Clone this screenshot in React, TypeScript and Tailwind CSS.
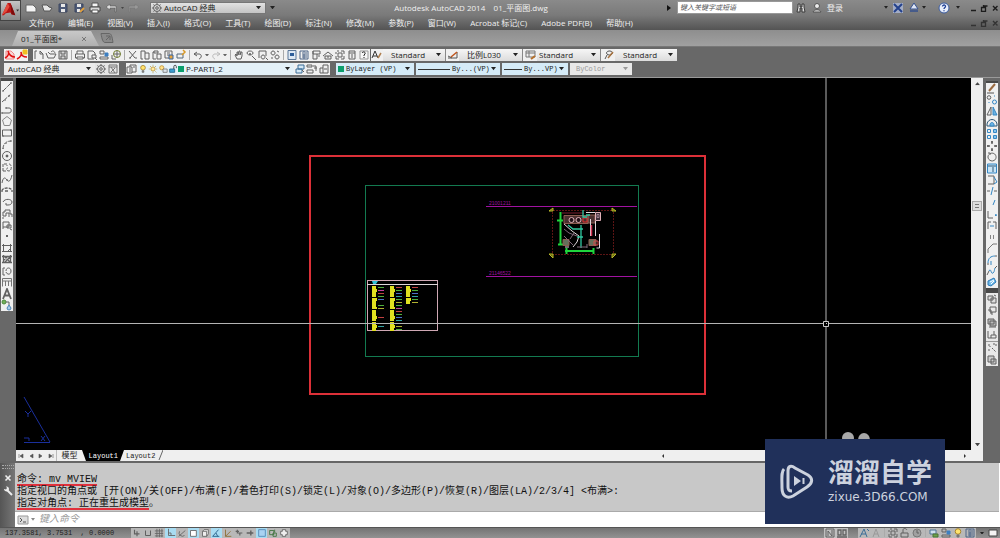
import type { ReactNode } from "react";

// every glyph is drawn on a 12x12 grid
const glyphs: Record<string, ReactNode> = {
  pdf: (
    <>
      <path d="M2 2h5l3 3v5H2z" fill="#f8d8d8" stroke="#e88" />
      <path d="M1 9c4-2 4-5 3-7 1 4 4 6 7 6" stroke="#e01010" strokeWidth="1.5" />
    </>
  ),
  pdfStar: (
    <>
      <path d="M1 10c4-2 5-5 4-7 0 4 3 5 6 5" stroke="#e01010" strokeWidth="1.6" />
      <path d="M7 1h4v4H7z" fill="#f0c020" stroke="#f0c020" />
    </>
  ),
  newFile: <path d="M2 10V2h2M7 2l3 3v5M7 2v3h3" />,
  open: <path d="M1 4l2 5h6l2-4H5M5 5L3 3M6 3c2-2 3-1 4 1" />,
  save: (
    <>
      <path d="M2 2h8v8H2z" fill="#d5d5d5" />
      <path d="M4 2v3h4V2M4 10V7h4v3" />
    </>
  ),
  qSave: (
    <>
      <path d="M2 2h8v8H2z" fill="#4d5a78" stroke="#3c4660" />
      <path d="M4 2h4v3H4zM4 7h4v3H4z" fill="#e8e8e8" stroke="none" />
    </>
  ),
  qSaveAs: (
    <>
      <path d="M2 2h8v8H2z" fill="#4d5a78" stroke="#3c4660" />
      <path d="M4 2h4v3H4zM4 7h3v3H4z" fill="#e8e8e8" stroke="none" />
      <path d="M7 10l4-4" stroke="#e0a040" strokeWidth="2" />
    </>
  ),
  qPrint: (
    <>
      <path d="M3 1h6v4H3z" fill="#f4f4f4" stroke="#555" />
      <path d="M1 5h10v4H1z" fill="#d8d8d8" stroke="#444" />
      <path d="M3 8h6v3H3z" fill="#fff" stroke="#555" />
    </>
  ),
  print: (
    <>
      <path d="M3 5V2h6v3M1.500 5h9v4h-9z" />
      <path d="M3 8h6v2H3z" fill="#fff" />
    </>
  ),
  preview: <path d="M8 10H2V2h5l2 2v2M6 6h4v3H6zM9 9l2 2" />,
  publish: (
    <>
      <path d="M2 2h4v3H2zM2 8h8v2H2z" />
      <path d="M7 4h3v3H7z" fill="#3d7fc0" stroke="#3d7fc0" />
    </>
  ),
  globe: (
    <>
      <circle cx="7" cy="5" r="3.500" stroke="#6d7a2c" />
      <path d="M7 2v6M4 5h6M2 6v4h4" />
    </>
  ),
  cut: <path d="M2 2l6 7M9 2L3 9M2 9h2M8 9h2" />,
  copy: <path d="M6 2H2v8h2M6 4h4v6H6zM6 2v2" />,
  paste: <path d="M3 3H2v7h3M3 2h4v2H3zM6 5h4v5H6z" />,
  match: (
    <>
      <path d="M2 2h7v7H2zM4 4h3M4 6h3" />
      <path d="M6 6h4v4H6z" fill="#e8a33a" stroke="#3566a8" />
    </>
  ),
  block: (
    <>
      <path d="M2 5h6v4H2z" stroke="#55687a" />
      <path d="M8 1l2 2-3 3" stroke="#d99a28" strokeWidth="1.500" />
    </>
  ),
  undo: <path d="M5 3L2 5l3 2M2 5h5c3 0 3 4 0 5" />,
  redo: <path d="M7 3l3 2-3 2M10 5H5c-3 0-3 4 0 5" stroke="#bbb" />,
  pan: <path d="M4 10L2 6l1-1 1 2V3h1v3l1-4h1v4l1-3h1v4L8 10z" />,
  zoom: <path d="M5 2a3 2 0 1 0 .1 0zM7 7l4 4M4 5h2M5 4v2" />,
  zoomWin: <path d="M2 9V2h7v5M6 6a2 2 0 1 0 .1 0zM9 9l2 2" />,
  zoomPrev: <path d="M4 2a2 2 0 1 0 .1 0zM8 6a2 2 0 1 0 .1 0zM8 2l2 1M3 8v2" />,
  props: (
    <>
      <path d="M2 1.500h8v9H2z" fill="#dde8f4" stroke="#5a7698" />
      <path d="M4 4h4v3H4z" fill="#2d5d9a" stroke="none" />
    </>
  ),
  dc: <path d="M2 2h8v8H2zM4 4h1M7 4h2M4 6h5M4 8h5M6 2v8" stroke="#4d6488" />,
  palette: <path d="M3 2h7v3H3zM3 2v8h4V5M8 7h2" />,
  sheet: <path d="M1 7l5-4 5 4M3 7h6v3H3zM5 8h2" />,
  markup: <path d="M3 2h2M7 2h3v3M10 7v3H7M5 10H2V7M2 5V3M4 4h4v4H4z" />,
  calc: <path d="M3 2h6v8H3zM3 4h6M5 6h2M5 8h2" />,
  help: (
    <>
      <path d="M2 2h8v8H2z" fill="#f8f8f8" stroke="#999" />
      <path d="M4 4c1-2 4-1 3 1L6 6v1M6 8v1" stroke="#222" />
    </>
  ),
  textStyle: (
    <>
      <path d="M1 9l3-7 3 7M2 7h4" stroke="#333" />
      <path d="M7 9l3-5" stroke="#b08050" strokeWidth="1.500" />
    </>
  ),
  dimStyle: (
    <>
      <path d="M1 9h9M1 7l4 2M10 3v6" stroke="#555" />
      <path d="M4 8l6-5" stroke="#c0551c" strokeWidth="1.500" />
    </>
  ),
  tableStyle: (
    <>
      <path d="M1 2h9v6H1zM1 4h9M4 2v6" stroke="#777" />
      <path d="M6 10l4-3" stroke="#b5702c" strokeWidth="2" />
    </>
  ),
  leaderStyle: (
    <>
      <path d="M6 2a3 2 0 1 0 1 0zM4 6L2 10" stroke="#555" />
      <path d="M5 9l5-6" stroke="#a97440" strokeWidth="1.500" />
    </>
  ),
  gear: (
    <>
      <circle cx="6" cy="6" r="3.500" />
      <circle cx="6" cy="6" r="1.300" />
      <path d="M6 1v1M6 10v1M1 6h1M10 6h1M2.500 2.500l1 1M8.500 8.500l1 1M9.500 2.500l-1 1M2.500 9.500l1-1" />
    </>
  ),
  myWs: <path d="M2 2h8v8H2zM2 4h8M4 4l4 6M8 5l-4 4" stroke="#777" />,
  layers: <path d="M1 4h5v6H1zM4 4V2h6v7H6M3 6h2M3 8h2M7 4h2" />,
  bulb: (
    <>
      <circle cx="6" cy="4.500" r="2.800" fill="#ffe36e" stroke="#a8842a" />
      <path d="M5 8h2v2H5z" fill="#777" stroke="#777" />
    </>
  ),
  sun: (
    <>
      <circle cx="6" cy="6" r="2.500" fill="#ffe9a0" stroke="#b8902e" />
      <path d="M6 1v1M6 10v1M1 6h1M10 6h1M2.500 2.500l1 1M9 9l1 1M9.500 2.500l-1 1" stroke="#b8902e" />
    </>
  ),
  freeze: (
    <>
      <circle cx="4.500" cy="4.500" r="2.500" fill="#ffe08a" stroke="#c09030" />
      <path d="M6 6h5v4H6z" fill="#dfe7ee" stroke="#777" />
    </>
  ),
  lock: (
    <>
      <path d="M2 6h6v4H2z" fill="#3d9fd0" stroke="#23648a" />
      <path d="M7 6V3c0-2 3-2 3 0v2" stroke="#333" />
    </>
  ),
  layerPrev: (
    <>
      <path d="M4 2h6v4H4zM2 6h6v4H2z" fill="#d5e8f5" stroke="#3c6f98" />
      <path d="M8 7l2 2" />
    </>
  ),
  layerState: <path d="M1 2h5v2H1zM1 7h6v3H1zM7 3h3v5M8 5h3" />,
  layerWalk: <path d="M5 2h5v8H5zM5 5H2v5h3M6 6h3" />,
  line: <path d="M2 10l8-8M1 10h2M9 2h2" strokeDasharray="5 1" />,
  xline: <path d="M1 10l9-8M3 8h2M7 4h2" strokeDasharray="3 1" />,
  pline: <path d="M1 9h7c3 0 3-5 0-5H5M1 8v2M5 3v2" />,
  polygon: <path d="M6 1.500l4.500 3.500-1.700 5.500H3.200L1.500 5z" stroke="#888" />,
  rect: <path d="M1.500 3h9v6h-9zM1 9h2M9 3h2" />,
  arc: <path d="M2 11c0-5 3-8 8-8M2 10v1M5 5v1M9 3h2" strokeDasharray="4 1" />,
  circle: (
    <>
      <circle cx="6" cy="6" r="4.500" />
      <circle cx="6" cy="6" r="1" fill="#333" />
    </>
  ),
  cloud: <path d="M2 10V3h4v2M2 10h3M8 3c3 0 3 7 0 7s-3-3-1-3" strokeDasharray="3 1" />,
  spline: <path d="M1 10c1-6 3-6 5-3s4 0 5-5M5 7h2" />,
  ellipse: <path d="M1 7c0-4 10-4 10 0M1 6v2M11 6v2M4 7h4" strokeWidth="1.300" strokeDasharray="3 1" />,
  ellArc: <path d="M2 6c2-4 9-3 9 0 0 2-2 3-4 3M4 8h2v2" />,
  insert: <path d="M2 9V5h2V3h5v4h2v3M2 9h3V6h3v4M1 11h2" />,
  makeBlock: <path d="M2 3h6v5H2zM6 6h4v3H6zM1 9h2M9 10l2 1" />,
  point: <circle cx="6" cy="6" r="1" fill="#333" stroke="none" />,
  hatch: <path d="M2.500 2v8M9.500 2v8M1 3.500h10M1 9.500h10M7 9l2-2" />,
  gradient: <path d="M2.500 2v8M9.500 2v8M1 3.500h10M1 9.500h10M3 7l4-4M4 9l5-5M3 3l6 6" strokeWidth="1.300" />,
  region: <path d="M2 3v7h2M5 6c0-4 5-4 5 0s-4 4-5 1M2 3h2" />,
  table: <path d="M1.500 2.500h9v8M1.500 2.500v8M1 5h10M4.500 5v5M7.500 5v5" stroke="#777" />,
  mtext: <path d="M2 11L6 1l4 10M3.500 7.500h5" strokeWidth="1.800" />,
  addSel: (
    <>
      <circle cx="3" cy="3" r="2" fill="#72b05a" stroke="#4e8a3a" />
      <path d="M5 3h3v3" />
      <path d="M8 6l2 3a2 2 0 1 1-4 0z" fill="#a9cbe8" stroke="#4b84b6" />
    </>
  ),
  erase: (
    <>
      <path d="M3 8l6-7" stroke="#9a6a40" strokeWidth="2" />
      <path d="M1 10h7" stroke="#555" />
    </>
  ),
  copyObj: (
    <>
      <circle cx="3" cy="3.500" r="1.800" />
      <circle cx="8.500" cy="8" r="2" stroke="#3487c4" />
      <path d="M8 2h1M3 8v1" stroke="#3487c4" />
    </>
  ),
  mirror: (
    <>
      <path d="M5 2v8H1z" />
      <path d="M7 2v8h4z" fill="#6db4e4" stroke="#3487c4" />
    </>
  ),
  offset: (
    <>
      <path d="M1 9h10V7c-1-6-9-6-10 0z" stroke="#2f5877" />
      <path d="M4 9V7c1-2 3-2 4 0v2z" fill="#6db4e4" stroke="#3487c4" />
    </>
  ),
  array: (
    <>
      <path d="M1.500 1.500h3v3h-3zM1.500 7.500h3v3h-3z" stroke="#3487c4" />
      <path d="M7.500 1.500h3v3h-3zM7.500 7.500h3v3h-3z" fill="#8ac5ee" stroke="#3487c4" />
    </>
  ),
  move: <path d="M6 1v3M6 8v3M1 6h3M8 6h3M5 2h2M5 10h2M2 5v2M10 5v2" strokeWidth="1.400" />,
  rotate: <path d="M4 2.500c6-2 8 5 4 7s-8-3-5-6M2 2h2v2" />,
  scale: (
    <>
      <path d="M1.500 2v9h9V2z" fill="#c9e4f6" stroke="#3487c4" />
      <path d="M2 4h8M7 5v5" stroke="#2c5878" />
    </>
  ),
  stretch: (
    <>
      <path d="M2 2h6v8H2" />
      <path d="M8 3l3 5-3 2" stroke="#3487c4" />
    </>
  ),
  trim: (
    <>
      <path d="M1 6h3M8 6h3" />
      <path d="M7 2L5 10" stroke="#3487c4" />
    </>
  ),
  extend: <path d="M9 3l-2 5" stroke="#3487c4" />,
  breakPt: (
    <>
      <path d="M2 3v7h5" />
      <path d="M9 7h1v1" stroke="#3487c4" strokeWidth="1.500" />
    </>
  ),
  breakObj: (
    <>
      <path d="M2 10V3h3M7 3h3v7" />
      <path d="M4 7h4" stroke="#3487c4" />
    </>
  ),
  join: <path d="M4 5h1M7 5h1M4 7h1M7 7h1" strokeWidth="1.300" />,
  chamfer: <path d="M2 11V7l5-5h4" stroke="#777" />,
  fillet: (
    <>
      <path d="M2 11V9M9 2h2" />
      <path d="M2 9c0-5 3-7 7-7M5 11V7" stroke="#3487c4" />
    </>
  ),
  blend: (
    <>
      <path d="M1 10l2-4M9 3l2-2" />
      <path d="M3 6c2-4 2 4 4 2s1-3 2-5" stroke="#3487c4" />
    </>
  ),
  explode: (
    <>
      <path d="M2 5l6-3 2 4-5 4-3-1z" fill="#75bbe8" stroke="#2a7ab8" />
      <path d="M4 6l4-2M5 8l3-3" stroke="#fff" />
    </>
  ),
  orderA: <path d="M2 3h5v4H2zM5 5h5v5H5zM8 2l2 1" fill="#ddd" />,
  orderB: <path d="M4 2h6v5H4zM2 5h3v4M6 7v3" />,
  orderC: <path d="M2 2h6v5H2zM4 4h6v5H4zM3 10h7" fill="#bbb" />,
  orderD: <path d="M2 2v7h3M5 6h5v3H5zM8 2v4" />,
  orderE: <path d="M2 3h2v2M7 2h3v3M3 7v3M6 6l4 4" strokeDasharray="2 1" />,
  orderF: <path d="M2 2h6v6H2zM5 5h5v5H5z" fill="#ccc" />,
  infer: <path d="M3 2v5h6M6 4v6" strokeWidth="1.400" />,
  snap: <path d="M3 3v6h6V3" strokeWidth="1.200" />,
  grid: <path d="M1 3.500h10M1 6.500h10M1 9.500h10M3.500 1v10M6.500 1v10M9.500 1v10" />,
  ortho: <path d="M3 1v8h8M3 6h3v3" />,
  polar: <path d="M2 10l8-7M3 4a4 4 0 0 0 6 5" />,
  osnap: <path d="M3 3h7v7H3z" fill="#fff" />,
  osnap3: <path d="M3 4h5v6H3zM3 4l2-2h5v5l-2 3" fill="#eee" />,
  otrack: <path d="M9 2L2 10h8M6 6l2 4" stroke="#1b5480" />,
  ducs: <path d="M3 2v8h7M3 10l6-6" stroke="#8c6a2c" />,
  dyn: <path d="M4 2v4h6M7 6v3M2 4h4" strokeWidth="1.400" />,
  lwt: <path d="M2 6h8M7 3v6" strokeWidth="1.700" />,
  tpy: <path d="M2 2h8v8H2z" fill="#a9d2f2" stroke="#4d86b5" />,
  qp: <path d="M2 3h5v5H2zM6 6h4v4H6zM8 2v3" stroke="#3a7038" />,
  sc: <path d="M4 2h4v2h2v4H8v2H4V8H2V4h2z" fill="#eee" />,
  model: <path d="M2 2h8v8H2zM4 9V4l4 5V3" />,
  views: <path d="M2 3h3v5H2zM7 3h3v5H7zM1 10h10" strokeWidth="1.300" />,
  anno: <path d="M2 10l4-8 3 8M3 7h5M9 2l2 2" stroke="#3b6e98" />,
  annoAuto: <path d="M3 10l3-8 3 8M4 7h4" stroke="#999" />,
  ucsLock: <path d="M2 6h7v4H2zM4 6V3c0-2 3-2 4 0" />,
  perf: (
    <>
      <circle cx="6" cy="6" r="4" fill="#a0a0a0" stroke="#777" />
      <path d="M6 3v3h2" />
    </>
  ),
  tray: (
    <>
      <path d="M2 3h6v4H2z" fill="#cfe0ee" stroke="#4f7596" />
      <path d="M5 7h5v3H5z" fill="#6da24a" stroke="#4b7236" />
    </>
  ),
  binoc: <path d="M3 2h2v3h2V2h2v3l1 5H7V6H5v4H2l1-5z" fill="#ddd" stroke="#3b3b3b" />,
  person: (
    <>
      <circle cx="6" cy="4" r="2.500" fill="#eee" stroke="#555" />
      <path d="M2 10c1-3 7-3 8 0z" fill="#ddd" stroke="#555" />
    </>
  ),
  exchange: (
    <>
      <path d="M1 1h10v10H1z" fill="#a3adc6" stroke="none" />
      <path d="M2 2l8 8M10 2l-8 8" stroke="#23418c" strokeWidth="2" />
    </>
  ),
  triangle: (
    <>
      <path d="M6 1l4 6H2z" fill="#dfe6f5" stroke="#34508f" />
      <path d="M2 9h8" stroke="#34508f" strokeWidth="1.500" />
    </>
  ),
  question: (
    <>
      <circle cx="6" cy="6" r="5" fill="#e8eefb" stroke="#3a5ba0" />
      <path d="M4.500 4.500c0-2 3.200-2 3 0 0 1-1.500 1-1.500 2.500M6 8.300v1" stroke="#1d3f96" strokeWidth="1.300" />
    </>
  ),
};

function Glyph({ name, className = "size-3" }: { name: string; className?: string }) {
  return (
    <svg viewBox="0 0 12 12" className={className} fill="none" stroke="#606060" strokeWidth="1" aria-hidden="true">
      {glyphs[name]}
    </svg>
  );
}

function Tool({ name, className = "" }: { name: string; className?: string }) {
  return (
    <button type="button" aria-label={name} className={`flex shrink-0 items-center justify-center ${className}`}>
      <Glyph name={name} />
    </button>
  );
}

function Caret({ className = "w-[5px]" }: { className?: string }) {
  return (
    <svg viewBox="0 0 6 4" className={`shrink-0 ${className}`} aria-hidden="true">
      <path d="M0 0h6L3 4z" fill="currentColor" />
    </svg>
  );
}

type ComboProps = {
  label: string;
  value: string;
  className?: string;
  textClass?: string;
  before?: ReactNode;
};

function Combo({ label, value, className = "text-[#222]", textClass = "pl-1", before }: ComboProps) {
  return (
    <label className={`relative flex h-3 shrink-0 items-center ${className}`}>
      {before}
      <select
        aria-label={label}
        className={`h-3 w-full min-w-0 flex-1 appearance-none bg-transparent leading-3 outline-none ${textClass}`}
      >
        <option>{value}</option>
      </select>
      <span className="pointer-events-none absolute inset-y-0 right-1 flex items-center">
        <Caret />
      </span>
    </label>
  );
}

const Sep = () => <span className="mx-0.5 h-2.5 w-px shrink-0 bg-[#aaa]" />;

const menus = [
  "文件(F)", "编辑(E)", "视图(V)", "插入(I)", "格式(O)", "工具(T)", "绘图(D)", "标注(N)",
  "修改(M)", "参数(P)", "窗口(W)", "Acrobat 标记(C)", "Adobe PDF(B)", "帮助(H)",
];

const standardTools = [
  ["newFile", "open", "save"],
  ["print", "preview", "publish", "globe"],
  ["cut", "copy", "paste", "match", "block"],
  ["undo", "redo"],
  ["pan", "zoom", "zoomWin", "zoomPrev"],
  ["props", "dc", "palette", "sheet", "markup", "calc", "help"],
];

const drawTools = [
  "line", "xline", "pline", "polygon", "rect", "arc", "circle", "cloud", "spline", "ellipse",
  "ellArc", "insert", "makeBlock", "point", "hatch", "gradient", "region", "table", "mtext", "addSel",
];

const modifyTools = [
  "erase", "copyObj", "mirror", "offset", "array", "move", "rotate", "scale", "stretch",
  "trim", "extend", "breakPt", "breakObj", "join", "chamfer", "fillet", "blend", "explode",
];

const statusTools = [
  { name: "infer", on: false },
  { name: "snap", on: false },
  { name: "grid", on: false },
  { name: "ortho", on: true },
  { name: "polar", on: false },
  { name: "osnap", on: true },
  { name: "osnap3", on: false },
  { name: "otrack", on: true },
  { name: "ducs", on: false },
  { name: "dyn", on: false },
  { name: "lwt", on: false },
  { name: "tpy", on: true },
  { name: "qp", on: false },
  { name: "sc", on: false },
];

function WindowButtons({ className }: { className: string }) {
  return (
    <div className={`flex items-center gap-px ${className}`}>
      <button type="button" aria-label="Minimize" className="w-2.5">
        <svg viewBox="0 0 10 8" fill="none" stroke="currentColor"><path d="M3 6.500h5" strokeWidth="1.500" /></svg>
      </button>
      <button type="button" aria-label="Restore" className="w-2.5">
        <svg viewBox="0 0 10 8" fill="none" stroke="currentColor"><path d="M2.500 3.500h4v4h-4zM4 2h4.500M4.500 1v2" strokeWidth="1.300" /></svg>
      </button>
      <button type="button" aria-label="Close" className="w-2.5">
        <svg viewBox="0 0 10 8" fill="none" stroke="currentColor"><path d="M3 2l4.500 4.500M7.500 2L3 6.500" strokeWidth="1.400" /></svg>
      </button>
    </div>
  );
}

function Header() {
  return (
    <header className="flex h-[30px] shrink-0 bg-linear-to-b from-[#8a8a8a] via-[#7a7a7a] to-[#545454] text-[#f0f0f0]">
      <button
        type="button"
        aria-label="Application menu"
        className="flex h-[21px] w-[21px] shrink-0 items-center border border-[#444] bg-linear-to-b from-[#c5c5c5] to-[#8b8b8b]"
      >
        <svg viewBox="0 0 20 20" className="size-[19px]" aria-hidden="true">
          <path d="M7 2h3l5 13-4-1-1-2-5 1-2 2H1z" fill="#b81414" />
          <path d="M7 2L1 15l5-4 3-5z" fill="#e34a3c" />
          <path d="M10 2l5 13-4-1z" fill="#7d0c0c" />
          <path d="M16 9h3l-1.500 2z" fill="#333" />
        </svg>
      </button>
      <div className="flex min-w-0 flex-1 flex-col">
        <div className="flex h-[15px] items-center">
          <div className="flex w-[129px] shrink-0 items-center gap-1 pl-1">
            <button type="button" aria-label="New">
              <svg viewBox="0 0 12 12" className="size-3"><path d="M1 3h7l3 3v4H1z" fill="#f4f4f4" stroke="#666" /></svg>
            </button>
            <button type="button" aria-label="Open">
              <svg viewBox="0 0 12 12" className="size-3"><path d="M1 3h5l2 2 3 1-2 3H3z" fill="#e6e6e6" stroke="#555" /></svg>
            </button>
            <Tool name="qSave" />
            <Tool name="qSaveAs" />
            <Tool name="qPrint" />
            <button type="button" aria-label="Undo" className="flex items-center gap-1 text-[#444]">
              <svg viewBox="0 0 12 12" className="size-3"><path d="M5 2L1 5l4 3V6h5v4h1V4H5z" fill="#ddd" stroke="#555" strokeWidth=".6" /></svg>
              <Caret className="w-[3px]" />
            </button>
            <button type="button" aria-label="Redo" className="flex items-center gap-1 text-[#444]">
              <svg viewBox="0 0 12 12" className="size-3"><path d="M7 2l4 3-4 3V6H2v4H1V4h6z" fill="#999" stroke="#777" strokeWidth=".6" /></svg>
            </button>
          </div>
          <Combo
            label="Workspace"
            value="AutoCAD 经典"
            className="w-[116px] border border-[#777] bg-linear-to-b from-[#e2e2e2] to-[#c4c4c4] text-[8px] text-[#222]"
            textClass="pl-px"
            before={<Glyph name="gear" className="size-3" />}
          />
          <span className="ml-1 text-[#222]"><Caret /></span>
          <h1 className="min-w-0 flex-1 truncate text-center text-[8px] leading-[15px]">
            Autodesk AutoCAD 2014 &nbsp;&nbsp; 01_平面图.dwg
          </h1>
          <div className="flex shrink-0 items-center text-[#222]">
            <svg viewBox="0 0 4 6" className="mr-1.5 h-1.5 w-1"><path d="M0 0v6l4-3z" fill="#111" /></svg>
            <input
              aria-label="Search"
              placeholder="键入关键字或短语"
              className="h-[13px] w-[116px] border border-[#999] bg-white px-0.5 text-[7px] italic placeholder:text-[#555]"
            />
            <Tool name="binoc" className="ml-0.5" />
            <Tool name="person" className="ml-1" />
            <a href="#login" className="ml-0.5 w-[53px] pl-0.5 text-[8px] text-[#f0f0f0]">登录</a>
            <span className="ml-1.5"><Caret className="w-1" /></span>
            <Tool name="exchange" className="ml-1" />
            <Tool name="triangle" className="ml-1" />
            <span className="ml-0.5"><Caret className="w-1" /></span>
            <Tool name="question" className="ml-3" />
            <span className="mr-2 ml-1.5"><Caret className="w-1" /></span>
            <WindowButtons className="text-[#1c1c1c]" />
          </div>
        </div>
        <div className="flex h-[15px] items-center justify-between">
          <nav className="flex w-[612px] justify-between pl-2 text-[8px] leading-[15px] whitespace-nowrap">
            {menus.map((item) => (
              <a key={item} href="#menu">{item}</a>
            ))}
          </nav>
          <WindowButtons className="text-[#333]" />
        </div>
      </div>
    </header>
  );
}

function FileTabs() {
  return (
    <div className="flex h-[17px] shrink-0 items-end border-b border-[#777] bg-linear-to-b from-[#8e8e8e] to-[#a0a0a0] pl-3">
      <div className="flex h-[15px] w-[87px] items-center justify-between bg-linear-to-b from-[#c8c8c8] to-[#b0b0b0] pr-3 pl-[9px] [clip-path:polygon(6px_0,calc(100%_-_8px)_0,100%_100%,0_100%)]">
        <a href="#file" className="text-[8px] leading-3 text-[#222]">01_平面图*</a>
        <button type="button" aria-label="Close tab" className="text-[#777]">
          <svg viewBox="0 0 6 6" className="size-1.5"><path d="M1 1l4 4M5 1L1 5" stroke="currentColor" /></svg>
        </button>
      </div>
      <button type="button" aria-label="New tab" className="mb-0.5">
        <svg viewBox="0 0 16 12" className="h-3 w-4" fill="none" stroke="#666">
          <path d="M2 1.500h8c2 0 3 2 4 9H6c-2 0-3-3-4-9z" fill="#8a8a8a" />
          <path d="M7 4h4v4M7 8l4-4" />
        </svg>
      </button>
    </div>
  );
}

function LineSample({ className }: { className: string }) {
  return <span className={`ml-0.5 h-px shrink-0 bg-[#333] ${className}`} />;
}

function Toolbars() {
  return (
    <div className="flex h-[31px] shrink-0 flex-col gap-0.5 border-b border-[#9a9a9a] bg-[#686868] pt-0.5 pl-1">
      <div className="flex h-3 items-center">
        <div className="mr-[5px] flex w-[24px] bg-[#f2f2f2]">
          <Tool name="pdf" />
          <Tool name="pdfStar" />
        </div>
        <div className="mr-px flex w-[337px] items-center bg-[#f0f0f0]">
          {standardTools.map((group, i) => (
            <div key={i} className="flex items-center">
              {i > 0 && <Sep />}
              {group.map((name) => (
                <span key={name} className="flex items-center text-[#666]">
                  <Tool name={name} />
                  {(name === "undo" || name === "redo") && <Caret className="mx-px w-1" />}
                </span>
              ))}
            </div>
          ))}
        </div>
        <div className="flex bg-[#f0f0f0] text-[8px]">
          <Tool name="textStyle" />
          <Combo label="Text style" value="Standard" className="w-[63px] border-r border-[#888] bg-linear-to-b from-[#f6f6f6] to-[#dcdcdc] text-[#222]" textClass="pl-2" />
          <Tool name="dimStyle" className="ml-px" />
          <Combo label="Dimension style" value="比例L030" className="w-[64px] border-r border-[#888] bg-linear-to-b from-[#f6f6f6] to-[#dcdcdc] text-[#222]" textClass="pl-2" />
          <Tool name="tableStyle" className="ml-0.5" />
          <Combo label="Table style" value="Standard" className="w-[64px] border-r border-[#888] bg-linear-to-b from-[#f6f6f6] to-[#dcdcdc] text-[#222]" textClass="pl-0.5" />
          <Tool name="leaderStyle" className="ml-0.5" />
          <Combo label="Leader style" value="Standard" className="w-[62px] bg-linear-to-b from-[#f6f6f6] to-[#dcdcdc] text-[#222]" textClass="pl-2" />
        </div>
      </div>
      <div className="flex h-3 items-center text-[8px]">
        <Combo label="Workspace list" value="AutoCAD 经典" className="w-[91px] bg-[#ececec] text-[#222]" />
        <div className="mr-[7px] flex w-[24px] bg-[#e6e6e6]">
          <Tool name="gear" />
          <Tool name="myWs" />
        </div>
        <div className="mr-1.5 flex bg-[#f0f0f0]">
          <Tool name="layers" />
          <Combo
            label="Layer"
            value="P-PARTI_2"
            className="w-[156px] bg-[#e4f1f8] text-[#222]"
            textClass="pl-0.5"
            before={
              <span className="flex shrink-0 items-center">
                <Glyph name="bulb" className="size-2.5" />
                <Glyph name="sun" className="size-2.5" />
                <Glyph name="freeze" className="size-2.5" />
                <Glyph name="lock" className="size-2.5" />
                <span className="size-1.5 bg-[#0b9e6c]" />
              </span>
            }
          />
          <Tool name="layerPrev" />
          <Tool name="layerState" />
          <Tool name="layerWalk" />
        </div>
        <div className="flex gap-0.5 font-['Liberation_Mono','Noto_Sans_CJK_SC',monospace] text-[7px]">
          <Combo
            label="Color"
            value="ByLayer (VP)"
            className="w-[78px] bg-[#d5ebf7] text-[#222]"
            textClass="pl-0.5"
            before={<span className="ml-0.5 size-1.5 shrink-0 bg-[#0b9e6c]" />}
          />
          <Combo label="Linetype" value="By...(VP)" className="w-[84px] bg-[#d5ebf7] text-[#222]" textClass="pl-0.5" before={<LineSample className="w-8" />} />
          <Combo label="Lineweight" value="By...VP)" className="w-[66px] bg-[#d5ebf7] text-[#222]" textClass="pl-0.5" before={<LineSample className="w-[18px]" />} />
          <Combo label="Plot style" value="ByColor" className="w-[62px] bg-[#e8e8e8] text-[#999]" textClass="pl-1.5" />
        </div>
      </div>
    </div>
  );
}

const legendColors = ["#4a70c8", "#30a0a0", "#4caf3c", "#b0b030", "#4caf3c", "#c040a0", "#c04040", "#4caf3c"];

const legend = [
  { x: 372, rows: 15, marks: [0, 1, 2, 3, 4, 6, 7, 10, 13] },
  { x: 390, rows: 15, marks: [0, 1, 2, 3, 4, 5, 6, 7, 8, 9, 10, 11, 12, 13, 14] },
  { x: 406, rows: 6, marks: [0, 1, 2, 3, 4, 5] },
];

// model space, drawn in its own units and scaled with the viewport
function Drawing() {
  return (
    <svg
      viewBox="16 78 955 372"
      preserveAspectRatio="xMidYMid slice"
      className="min-w-0 flex-1 bg-black"
      fill="none"
      role="img"
      aria-label="01_平面图"
    >
      <rect x="310" y="156" width="395" height="238" stroke="#dc3038" strokeWidth="2" />
      <rect x="365.500" y="185.500" width="273" height="171" stroke="#137a50" />

      <g stroke="#a012a0" fill="#a012a0">
        <path d="M486 206.500h151M486 276.500h151" />
        <g stroke="none" fontFamily="Liberation Sans, sans-serif" fontSize="5">
          <text x="489" y="205">21001211</text>
          <text x="489" y="275">21146522</text>
        </g>
      </g>

      <path d="M552.500 212v43M552 254.500h61M613.500 212v43M553 210.500h60" stroke="#5c1414" strokeDasharray="2 1" />
      <path d="M549 211l4-3v3zM612 208v3h4zM549 254l4 4v-4zM612 254v4l4-4z" fill="#606010" stroke="#b8b828" />
      <path d="M560.500 212v33M557 220.500h6M558 244.500h5M565 251h29M566.500 248v6M593.500 248v6" stroke="#1fd43c" strokeWidth="2" />
      <path d="M562 213h22" stroke="#7a2030" />
      <g stroke="#8c5c50">
        <path d="M564 215.500h24v8h-24zM588 215h7v8h-7z" fill="#4a3030" />
        <path d="M563 239.500h6v6h-6zM589 239.500h7v6h-7z" fill="#64705a" />
      </g>
      <g stroke="#e0b0b8">
        <circle cx="571.500" cy="220" r="2.500" fill="#221018" />
        <circle cx="578.500" cy="220" r="2.500" fill="#221018" />
        <path d="M583 218h4v4h-4z" stroke="#e03030" />
        <path d="M595.500 212.500h5v8h-5z" fill="#40303a" />
        <path d="M597 214.500h2v3h-2z" stroke="#a08090" />
      </g>
      <path d="M586 212.500h9M590.500 219v17M595.500 221v15M599.500 234v14h-3M564 224l8 7 7 5-2 6-4 5M565 247h4" stroke="#e0d8dc" />
      <path d="M591.500 225v11" stroke="#d03050" strokeWidth="1.500" />
      <path d="M581 225v23M568 225l5 4h10M577 237h6M583 210v7h4M586 215h4" stroke="#30c8a0" strokeWidth="1.300" />
      <path d="M564 229l5 4 8 3M564 236l9 9M574 233l-4 6M577 247h10M587 244v4" stroke="#80687a" />
      <path d="M594 241h4v4h-4z" stroke="#d84848" />

      <rect x="367.500" y="280.500" width="70" height="50" stroke="#cfa8b4" />
      <path d="M367 284.500h71" stroke="#ded6d8" />
      <path d="M372 281h6l-2 3h-3z" fill="#30c0d8" />
      {legend.map((col) => (
        <g key={col.x}>
          {Array.from({ length: col.rows }, (_, i) => (
            <rect key={i} x={col.x} y={286 + i * 3} width={i % 3 === 1 ? 5 : 4} height={i % 4 === 3 ? 2 : 3} fill="#e0e020" />
          ))}
          {col.marks.map((i) => (
            <path key={i} d={`M${col.x + 6} ${287.5 + i * 3}h6`} stroke={legendColors[(i + col.x) % 8]} />
          ))}
        </g>
      ))}

      <path d="M24 397l26 45M24 442.500h26M25 411l3 3 3-3M28 414v3M24 438h5v3M41 436l4 5M45 436l-4 5" stroke="#1a2f9c" />

      <ellipse cx="848" cy="438" rx="6" ry="6" fill="#a8a8a8" />
      <ellipse cx="864" cy="440" rx="6" ry="7" fill="#a8a8a8" />
      <path d="M16 323.500h807M829 323.500h142M826 78v243M826 326v124" stroke="#b4b4b4" />
      <path d="M823.500 321.500h5v5h-5zM826 323.500h1" stroke="#c8c8c8" />
    </svg>
  );
}

function LayoutTabs() {
  return (
    <div className="flex h-[11px] shrink-0 items-stretch bg-[#efefef] font-['Liberation_Mono','Noto_Sans_CJK_SC',monospace] text-[7px] leading-[10px] text-[#222]">
      <div className="flex w-[41px] items-center justify-around border-r border-[#bbb] text-[#555]">
        {["M1 1v4M5 1L2 3l3 2z", "M5 1L2 3l3 2z", "M1 1l3 2-3 2z", "M1 1l3 2-3 2zM5 1v4"].map((d) => (
          <button key={d} type="button" aria-label="Scroll tabs">
            <svg viewBox="0 0 6 6" className="size-1.5"><path d={d} fill="currentColor" stroke="currentColor" strokeWidth=".6" /></svg>
          </button>
        ))}
      </div>
      <button type="button" className="w-[25px] text-[8px]">模型</button>
      <button type="button" className="w-[42px] bg-black pr-1.5 text-right text-white [clip-path:polygon(0_0,100%_0,calc(100%_-_4px)_100%,4px_100%)]">
        Layout1
      </button>
      <button type="button" className="w-[34px] pl-0.5 text-left">Layout2</button>
      <svg viewBox="0 0 5 10" className="h-2.5 w-[5px]"><path d="M5 0L1 10" stroke="#666" /></svg>
      <div className="flex-1" />
      <div className="flex w-1/3 items-center justify-between">
        <button type="button" aria-label="Scroll left">
          <svg viewBox="0 0 4 6" className="h-1.5 w-1"><path d="M3 1v4L1 3z" fill="#333" /></svg>
        </button>
        <button type="button" aria-label="Scroll right" className="mr-4">
          <svg viewBox="0 0 4 6" className="h-1.5 w-1"><path d="M1 1v4l2-2z" fill="#333" /></svg>
        </button>
      </div>
    </div>
  );
}

function Workspace() {
  return (
    <main className="flex min-h-0 flex-1 bg-[#686868]">
      <aside className="w-4 shrink-0 pl-px">
        <div className="h-[3px] w-3 bg-[#484848]" />
        <div className="flex h-[230px] w-3 flex-col justify-between bg-[#f0f0f0]">
          {drawTools.map((name) => (
            <Tool key={name} name={name} className="h-[11px]" />
          ))}
        </div>
      </aside>
      <div className="flex min-w-0 flex-1 flex-col">
        <div className="flex min-h-0 flex-1">
          <Drawing />
          <div className="flex w-3 shrink-0 flex-col items-center justify-between bg-[#efefef] py-1 text-[#444]">
            <button type="button" aria-label="Scroll up" className="rotate-180"><Caret /></button>
            <div className="flex h-2.5 w-2.5 items-center justify-center border border-[#aaa] bg-[#dedede]">
              <span className="h-1 w-1 border-y border-[#777]" />
            </div>
            <div />
            <button type="button" aria-label="Scroll down"><Caret /></button>
          </div>
        </div>
        <LayoutTabs />
      </div>
      <aside className="flex w-[17px] shrink-0 flex-col items-center">
        <div className="mt-[3px] h-0.5 w-3 bg-[#484848]" />
        <div className="flex h-[205px] w-3 flex-col justify-between bg-[#f0f0f0]">
          {modifyTools.map((name) => (
            <Tool key={name} name={name} className="h-[11px]" />
          ))}
        </div>
        <div className="h-[5px] w-3 bg-[#484848]" />
        <div className="flex w-3 flex-col bg-[#e8e8e8]">
          {["orderA", "orderB", "orderC", "orderD"].map((name) => <Tool key={name} name={name} />)}
          <span className="h-px bg-[#999]" />
          {["orderE", "orderF"].map((name) => <Tool key={name} name={name} />)}
        </div>
      </aside>
    </main>
  );
}

function CommandLine() {
  return (
    <section className="flex h-[66px] shrink-0 border-t-2 border-[#666] font-['Liberation_Mono','Noto_Sans_CJK_SC',monospace] text-[10px] leading-3 text-[#111]">
      <div className="flex w-[15px] shrink-0 flex-col items-center bg-linear-to-r from-[#555] to-[#777] pt-0.5 text-[#eee]">
        <span className="h-1 w-3 border-y border-dotted border-[#aaa]" />
        <button type="button" aria-label="Close" className="mt-[5px]">
          <svg viewBox="0 0 8 8" className="size-2"><path d="M1.500 1.500l5 5M6.500 1.500l-5 5" stroke="currentColor" strokeWidth="1.600" /></svg>
        </button>
        <button type="button" aria-label="Customize" className="mt-1">
          <svg viewBox="0 0 10 10" className="size-2.5"><path d="M4.500 4.500L9 9" stroke="currentColor" strokeWidth="2" /><path d="M1 3l2 .500L4 2 3 .500c2-.500 4 2 2.500 4S1 5 1 3z" fill="currentColor" /></svg>
        </button>
      </div>
      <div className="flex min-w-0 flex-1 flex-col border-r border-white">
        <div className="flex min-h-0 flex-1 flex-col justify-end overflow-hidden bg-[#c8c8c8] pb-px pl-0.5 whitespace-nowrap">
          <p>
            <span className="underline decoration-[#e0303c] decoration-2 underline-offset-2 [text-decoration-skip-ink:none]">命令: mv MVIEW</span>
          </p>
          <p>指定视口的角点或 [开(ON)/关(OFF)/布满(F)/着色打印(S)/锁定(L)/对象(O)/多边形(P)/恢复(R)/图层(LA)/2/3/4] &lt;布满&gt;:</p>
          <p>
            <span className="underline decoration-[#e0303c] decoration-2 underline-offset-2 [text-decoration-skip-ink:none]">指定对角点: 正在重生成模型</span>。
          </p>
        </div>
        <div className="flex h-4 shrink-0 items-center border-t border-[#aaa] bg-white pl-0.5">
          <button type="button" aria-label="Recent commands" className="flex items-center gap-0.5 text-[#888]">
            <svg viewBox="0 0 12 10" className="h-2.5 w-3" fill="none"><path d="M1 1h10v8H1z" fill="#ddd" stroke="#999" /><path d="M3 3l2 2-2 2M6 7h3" stroke="#555" /></svg>
            <Caret className="w-1" />
          </button>
          <input
            aria-label="Command"
            placeholder="键入命令"
            className="h-3 flex-1 bg-transparent pl-1 italic outline-none placeholder:text-[#999]"
          />
        </div>
      </div>
    </section>
  );
}

function StatusBar() {
  return (
    <footer className="flex h-[11px] shrink-0 items-center overflow-hidden border-t border-[#555] bg-linear-to-b from-[#747474] to-[#929292]">
      <span className="w-[131px] pl-[5px] font-['Liberation_Mono',monospace] text-[7px] leading-[10px] whitespace-pre text-[#1c1c1c]">
        137.3581, 3.7531  , 0.0000
      </span>
      <div className="flex w-[159px] justify-between bg-[#b8b8b8]">
        {statusTools.map(({ name, on }) => (
          <button
            key={name}
            type="button"
            aria-label={name}
            aria-pressed={on}
            className={on ? "flex w-[11px] items-center justify-center bg-[#a9dcf2]" : "flex w-[11px] items-center justify-center"}
          >
            <Glyph name={name} className="size-2.5" />
          </button>
        ))}
      </div>
      <div className="ml-auto flex items-center gap-2.5 text-[#222]">
        <div className="flex bg-[#c0c0c0]">
          <Tool name="model" />
          <Tool name="views" />
        </div>
        <div className="flex bg-[#b8b8b8]">
          <Tool name="anno" />
          <Tool name="annoAuto" />
          <Sep />
          <Tool name="markup" />
          <Tool name="ucsLock" />
          <Tool name="perf" />
          <Sep />
          <Tool name="tray" />
          <Tool name="publish" />
          <Tool name="bulb" />
          <Tool name="dc" />
        </div>
      </div>
      <span className="mx-1 text-[#222]"><Caret className="w-1" /></span>
      <button type="button" aria-label="Clean screen" className="mr-0.5">
        <svg viewBox="0 0 10 8" className="h-2 w-2.5"><path d="M1 1h8v6H1z" fill="#f4f4f4" stroke="#444" /></svg>
      </button>
    </footer>
  );
}

function Watermark() {
  return (
    <div className="absolute right-[55px] bottom-3.5 flex h-[85px] w-[180px] items-center gap-3 bg-[#20305a] pl-[15px] text-[#ccd2de]">
      <svg viewBox="0 0 36 36" className="size-9 shrink-0" fill="none" stroke="currentColor" aria-hidden="true">
        <path d="M4 5C1 8 2 14 2 24c0 8 5 11 11 8l14-9c6-4 6-9 1-12L15 4C11 1 8 2 8 7v16c0 3 1 4 4 4" strokeWidth="3" />
        <path d="M14 12l7 5-7 5z" fill="currentColor" stroke="none" />
        <path d="M23.500 14v6" strokeWidth="2" />
      </svg>
      <div className="flex flex-col gap-1 pb-1.5">
        <span className="font-['Noto_Sans_CJK_SC',sans-serif] text-[26px] leading-8 font-bold whitespace-nowrap">溜溜自学</span>
        <span className="font-['DejaVu_Sans',sans-serif] text-[12px] leading-3 whitespace-nowrap">zixue.3D66.COM</span>
      </div>
    </div>
  );
}

export default function App() {
  return (
    <div className="relative flex h-screen min-h-96 flex-col overflow-hidden bg-[#686868] font-['Open_Sans','Noto_Sans_CJK_SC',sans-serif]">
      <Header />
      <FileTabs />
      <Toolbars />
      <Workspace />
      <CommandLine />
      <StatusBar />
      <Watermark />
    </div>
  );
}
